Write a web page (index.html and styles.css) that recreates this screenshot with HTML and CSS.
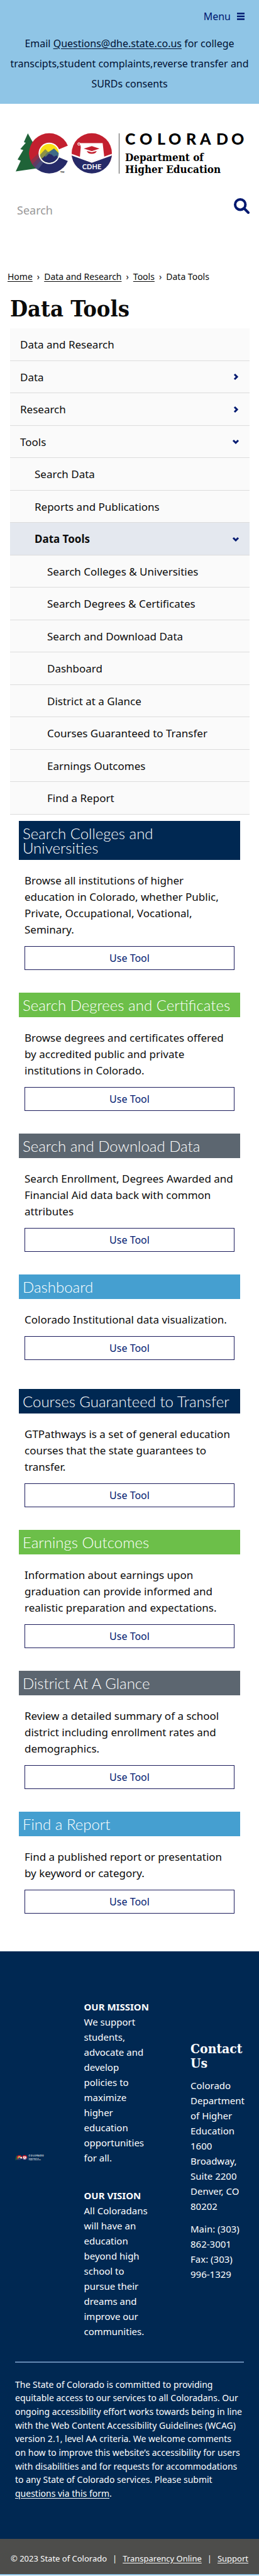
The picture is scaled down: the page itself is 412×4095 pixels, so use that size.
FILE: index.html
```html
<!DOCTYPE html>
<html lang="en">
<head>
<meta charset="utf-8">
<meta name="viewport" content="width=device-width, initial-scale=1">
<title>Data Tools | Colorado Department of Higher Education</title>
<link rel="stylesheet" href="styles.css">
</head>
<body>
<div class="topbar">
  <button class="menu-btn" type="button">Menu
    <svg class="menu-icon" viewBox="0 0 12 12" aria-hidden="true"><path d="M0 1.5h12M0 6h12M0 10.5h12"/></svg>
  </button>
  <p class="notice">Email <a href="mailto:Questions@dhe.state.co.us">Questions@dhe.state.co.us</a> for college transcipts,student complaints,reverse transfer and SURDs consents</p>
</div>

<header class="site-header">
  <a class="logo" href="#" aria-label="Colorado Department of Higher Education">
    <svg viewBox="0 0 366 68">
      <defs>
        <clipPath id="c-disc"><circle cx="53.3" cy="32.7" r="32"/></clipPath>
        <clipPath id="sun-disc"><circle cx="53.3" cy="32.7" r="15"/></clipPath>
        <clipPath id="seal-disc"><circle cx="121" cy="32.7" r="32"/></clipPath>
      </defs>
      <g id="emblem">
        <path fill="#1f6338" d="M19.3 1 31 22l12 36-12-1-31 4.500 8-17-5-2 9-15-4.700-1.500L16 16l-3-1z"/>
        <g clip-path="url(#c-disc)">
          <path fill="#c3202f" d="M20 0h68v36H20z"/>
          <path fill="#c3202f" d="M20 30h30L32 56H20z"/>
          <path fill="#262a68" d="M88 34v34H28l12-23 14-11z"/>
          <path fill="#8e3048" d="M21 47 38 31l3 5-17 18z"/>
          <path fill="#5f3b63" d="m24 53 16-17 3 6-15 17z"/>
          <path fill="#474a7b" d="m28 58 14-17 3 5-12 16z"/>
        </g>
        <path class="logo-gap" d="M53.300 32.700 86 19.200v27z"/>
        <circle class="logo-gap" cx="53.300" cy="32.700" r="17"/>
        <g clip-path="url(#sun-disc)">
          <path fill="#f8df16" d="M36 16h36v34H36z"/>
          <path fill="#8d9146" d="m36 38 11-12 10 10-8 12H36z"/>
          <path fill="#3f6b87" d="m49 33 12-8 12 12v12H45z"/>
          <path fill="#262a68" d="m36 46 17-15 8 7 4-2 8 12H36z"/>
          <path fill="#5d7768" d="m47 35 6-5 4 5-4-2-6 6z"/>
        </g>
        <g clip-path="url(#seal-disc)">
          <path fill="#c3202f" d="M88 0h66v50H88z"/>
          <path fill="#262a68" d="m88 35.500 33 12 33-12V68H88z"/>
          <path fill="none" stroke="#fff" stroke-width="2.500" d="m88 34.500 33 12 33-12"/>
        </g>
        <path fill="#fff" d="M102 16.500h36.300l2.600 22.500L121 45.200l-19-6 1.500-16.500z"/>
        <circle cx="100.600" cy="18" r="1.800" fill="none" stroke="#fff" stroke-width="1.200"/>
        <path fill="#c3202f" d="m108.300 25.300 12.700-4 12.300 4-12.300 4zM113 29l8 2 8-2-2 3q-6 3-12 0z"/>
        <text class="seal-text" x="121" y="58">CDHE</text>
        <text class="tm" x="71" y="64">TM</text>
      </g>
      <path stroke="#555" d="M164.500 1v64"/>
      <text class="wordmark" y="18.500" x="174 197 225 243 271 293 319 343">COLORADO</text>
      <text class="dept" x="174" y="45">Department of</text>
      <text class="dept" x="174" y="64">Higher Education</text>
    </svg>
  </a>
  <form class="search">
    <input type="search" placeholder="Search" aria-label="Search">
    <button type="submit" aria-label="Submit search">
      <svg viewBox="0 0 25 25" aria-hidden="true"><circle cx="10.200" cy="10.200" r="8.200"/><path d="m16.500 16.500 6.500 6.500"/></svg>
    </button>
  </form>
</header>

<main>
  <nav class="crumbs" aria-label="Breadcrumb">
    <a href="#">Home</a><span>›</span><a href="#">Data and Research</a><span>›</span><a href="#">Tools</a><span>›</span><span>Data Tools</span>
  </nav>
  <h1>Data Tools</h1>

  <nav class="side-nav" aria-label="Section">
    <ul>
      <li class="row"><a href="#">Data and Research</a></li>
      <li class="row"><a href="#">Data</a><button type="button" aria-label="Expand Data"><svg viewBox="0 0 12 12"><path d="m4 2 4 4-4 4"/></svg></button></li>
      <li class="row"><a href="#">Research</a><button type="button" aria-label="Expand Research"><svg viewBox="0 0 12 12"><path d="m4 2 4 4-4 4"/></svg></button></li>
      <li class="row"><a href="#">Tools</a><button type="button" aria-label="Collapse Tools"><svg viewBox="0 0 12 12"><path d="m2 4 4 4 4-4"/></svg></button></li>
      <li class="row level-2"><a href="#">Search Data</a></li>
      <li class="row level-2"><a href="#">Reports and Publications</a></li>
      <li class="row level-2 current"><a href="#" aria-current="page">Data Tools</a><button type="button" aria-label="Collapse Data Tools"><svg viewBox="0 0 12 12"><path d="m2 4 4 4 4-4"/></svg></button></li>
      <li class="row level-3"><a href="#">Search Colleges &amp; Universities</a></li>
      <li class="row level-3"><a href="#">Search Degrees &amp; Certificates</a></li>
      <li class="row level-3"><a href="#">Search and Download Data</a></li>
      <li class="row level-3"><a href="#">Dashboard</a></li>
      <li class="row level-3"><a href="#">District at a Glance</a></li>
      <li class="row level-3"><a href="#">Courses Guaranteed to Transfer</a></li>
      <li class="row level-3"><a href="#">Earnings Outcomes</a></li>
      <li class="row level-3"><a href="#">Find a Report</a></li>
    </ul>
  </nav>

  <div class="tools">
    <div class="tool-group">
      <section class="tool navy"><h2>Search Colleges and<br>Universities</h2><div class="tool-body"><p>Browse all institutions of higher education in Colorado, whether Public, Private, Occupational, Vocational, Seminary.</p><a class="use" href="#">Use Tool</a></div></section>
      <section class="tool green"><h2>Search Degrees and Certificates</h2><div class="tool-body"><p>Browse degrees and certificates offered by accredited public and private institutions in Colorado.</p><a class="use" href="#">Use Tool</a></div></section>
      <section class="tool gray"><h2>Search and Download Data</h2><div class="tool-body"><p>Search Enrollment, Degrees Awarded and Financial Aid data back with common attributes</p><a class="use" href="#">Use Tool</a></div></section>
      <section class="tool blue"><h2>Dashboard</h2><div class="tool-body"><p>Colorado Institutional data visualization.</p><a class="use" href="#">Use Tool</a></div></section>
    </div>
    <div class="tool-group">
      <section class="tool navy"><h2>Courses Guaranteed to Transfer</h2><div class="tool-body"><p>GTPathways is a set of general education courses that the state guarantees to transfer.</p><a class="use" href="#">Use Tool</a></div></section>
      <section class="tool green"><h2>Earnings Outcomes</h2><div class="tool-body"><p>Information about earnings upon graduation can provide informed and realistic preparation and expectations.</p><a class="use" href="#">Use Tool</a></div></section>
      <section class="tool gray"><h2>District At A Glance</h2><div class="tool-body"><p>Review a detailed summary of a school district including enrollment rates and demographics.</p><a class="use" href="#">Use Tool</a></div></section>
      <section class="tool blue"><h2>Find a Report</h2><div class="tool-body"><p>Find a published report or presentation by keyword or category.</p><a class="use" href="#">Use Tool</a></div></section>
    </div>
  </div>
</main>

<footer>
  <div class="footer-main">
    <div class="footer-cols">
      <svg class="footer-logo" viewBox="0 0 366 68" role="img" aria-label="Colorado Department of Higher Education">
        <use href="#emblem"/>
        <path stroke="#fff" d="M164.500 1v64"/>
        <text class="wordmark" y="18.500" x="174 197 225 243 271 293 319 343">COLORADO</text>
        <text class="dept" x="174" y="45">Department of</text>
        <text class="dept" x="174" y="64">Higher Education</text>
      </svg>
      <div class="mission">
        <p><strong>OUR MISSION</strong><br>We support students, advocate and develop policies to maximize higher education opportunities for all.</p>
        <p><strong>OUR VISION</strong><br>All Coloradans will have an education beyond high school to pursue their dreams and improve our communities.</p>
      </div>
      <div class="contact">
        <h2>Contact Us</h2>
        <p>Colorado Department of Higher Education<br>1600 Broadway, Suite 2200<br>Denver, CO 80202</p>
        <p>Main: (303) 862-3001<br>Fax: (303) 996-1329</p>
      </div>
    </div>
    <hr>
    <p class="access">The State of Colorado is committed to providing equitable access to our services to all Coloradans. Our ongoing accessibility effort works towards being in line with the Web Content Accessibility Guidelines (WCAG) version 2.1, level AA criteria. We welcome comments on how to improve this website’s accessibility for users with disabilities and for requests for accommodations to any State of Colorado services. Please submit <a href="#">questions via this form</a>.</p>
  </div>
  <div class="legal"><span>© 2023 State of Colorado</span><span>|</span><a href="#">Transparency Online</a><span>|</span><a href="#">Support</a></div>
</footer>
</body>
</html>
```
FILE: styles.css
```css
*, *::before, *::after { box-sizing: border-box; }
body { margin: 0; background: #fff; color: #0b0b0b; font: 16px/24px "Noto Sans", "Open Sans", sans-serif; }
p, h1, h2, ul { margin: 0; padding: 0; }
a { color: inherit; text-underline-offset: 2px; }
button { border: 0; padding: 0; background: none; font: inherit; cursor: pointer; }

.topbar { background: #8fc5e6; padding: 14px 16px 16px; color: #001033; }
.menu-btn { display: flex; align-items: center; gap: 10px; margin: 0 7px 15px auto; color: #001970; }
.menu-icon { width: 12px; height: 12px; stroke: currentColor; stroke-width: 2.5; }
.notice { line-height: 32px; text-align: center; }

.site-header { padding: 46px 12px 0 25px; }
.logo { display: block; max-width: 366px; margin-right: 9px; text-decoration: none; }
.logo svg { display: block; width: 100%; overflow: visible; }
.logo-gap { fill: #fff; }
.seal-text { font: 700 11px Lato, sans-serif; text-anchor: middle; fill: #fff; }
.tm { font: 700 4px Lato, sans-serif; }
.wordmark { font: 900 25px Lato, sans-serif; }
.dept { font: 700 17px "DejaVu Serif Condensed", "DejaVu Serif", serif; }
.search { display: flex; align-items: flex-start; margin-top: 35px; height: 64px; }
.search input { flex: 1; min-width: 0; height: 40px; padding: 0 2px; border: 0; background: none; font: 18px/24px "Noto Sans", sans-serif; }
.search input::placeholder { color: #999; opacity: 1; }
.search button { padding-top: 1px; }
.search svg { display: block; width: 25px; height: 25px; margin-right: 3px; fill: none; stroke: #001970; stroke-width: 4; stroke-linecap: round; }

.crumbs { display: flex; gap: 7px; padding: 50px 12px 0; font-size: 14px; }
h1 { padding: 14px 16px 0; font: 700 36px/48px "DejaVu Serif Condensed", "DejaVu Serif", serif; }

.side-nav { margin: 8px 15px 0 16px; }
.side-nav ul { list-style: none; }
.row { display: flex; align-items: center; padding: 13px 16px 12px; border-bottom: 1px solid #dcdcdc; background: #fafafa; font-size: 17px; line-height: 1.5; }
.row a { flex: 1; text-decoration: none; }
.row svg { display: block; width: 12px; height: 12px; fill: none; stroke: #001970; stroke-width: 3; }
.level-2 { padding-left: 39px; }
.level-3 { padding-left: 59px; }
.current { background: #e4e8ef; font-weight: 700; }

.tools { display: flex; flex-direction: column; gap: 46px; padding: 10px 30px 60px; }
.tool-group { display: flex; flex-direction: column; gap: 36px; }
.tool h2 { padding: 8px 6px; color: #fff; font: 300 24px/23px Lato, sans-serif; }
.navy h2 { background: #002852; }
.green h2 { background: #6cbf49; }
.gray h2 { background: #5c6670; }
.blue h2 { background: #459fd0; }
.tool-body { padding: 20px 9px 0; font-size: 17px; line-height: 26px; }
.use { display: block; margin-top: 13px; border: 1px solid #1c1c5c; color: #001970; font-size: 16px; line-height: 36px; text-align: center; text-decoration: none; }

footer { color: #fff; }
.footer-main { background: #002852; padding: 76px 24px 61px; font-size: 15px; }
.footer-cols { display: grid; grid-template-columns: 46px 106px 85px; justify-content: space-between; align-items: center; }
.footer-logo { display: block; width: 46px; margin-bottom: 34px; overflow: visible; fill: #fff; }
.footer-logo .logo-gap { fill: #002852; }
.mission { display: grid; gap: 36px; }
.contact { display: grid; gap: 12px; margin-bottom: 24px; }
.contact h2 { font: 700 21px/23px "DejaVu Serif Condensed", "DejaVu Serif", serif; }
hr { height: 2px; margin: 36px 0 24px; border: 0; background: #6488b3; }
.access { font-size: 14px; line-height: 1.55; }
.legal { display: flex; flex-wrap: wrap; justify-content: center; gap: 9px; padding: 19px 16px 13px; border-bottom: 2px solid #8fc5e6; background: #4d4d4b; font-size: 13px; }
```
